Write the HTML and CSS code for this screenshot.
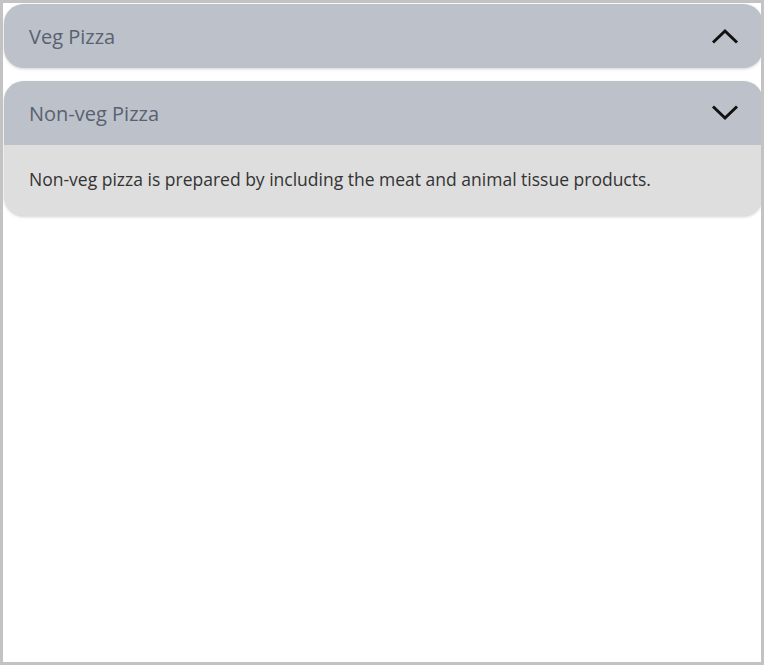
FILE: index.html
```html
<!DOCTYPE html>
<html lang="en">
<head>
<meta charset="utf-8">
<title>Pizza Accordion</title>
<link rel="stylesheet" href="styles.css">
</head>
<body>
<div class="frame">
  <div class="accordion">
    <div class="item">
      <div class="item-header">
        <span class="item-title">Veg Pizza</span>
        <svg class="chevron" width="28" height="16" viewBox="0 0 28 16"><path d="M2 14.5 L14 3 L26 14.5" fill="none" stroke="#111" stroke-width="3"/></svg>
      </div>
    </div>
    <div class="item">
      <div class="item-header">
        <span class="item-title">Non-veg Pizza</span>
        <svg class="chevron" width="28" height="16" viewBox="0 0 28 16"><path d="M2 1.5 L14 13 L26 1.5" fill="none" stroke="#111" stroke-width="3"/></svg>
      </div>
      <div class="item-body">Non-veg pizza is prepared by including the meat and animal tissue products.</div>
    </div>
  </div>
</div>
</body>
</html>
```
FILE: styles.css
```css
html, body {
  margin: 0;
  padding: 0;
  background: #ffffff;
}
.frame {
  width: 764px;
  height: 665px;
  box-sizing: border-box;
  border: 3px solid #c3c3c3;
  overflow: hidden;
  padding: 1px 0 0 1px;
  font-family: "Open Sans", "Noto Sans", sans-serif;
}
.accordion {
  display: flex;
  flex-direction: column;
  gap: 13px;
  width: 759px;
}
.item {
  border-radius: 20px;
  overflow: hidden;
  box-shadow: 0 1px 3px rgba(0, 0, 0, 0.18);
  background: #dedede;
}
.item-header {
  height: 64px;
  background: #bcc1ca;
  display: flex;
  align-items: center;
  justify-content: space-between;
  padding: 0 24px 0 25px;
}
.item-title {
  font-size: 20px;
  color: #596270;
}
.chevron {
  display: block;
}
.item-body {
  height: 71px;
  display: flex;
  align-items: center;
  padding: 0 25px 4px;
  font-size: 17.5px;
  color: #333333;
  box-sizing: border-box;
}
```
